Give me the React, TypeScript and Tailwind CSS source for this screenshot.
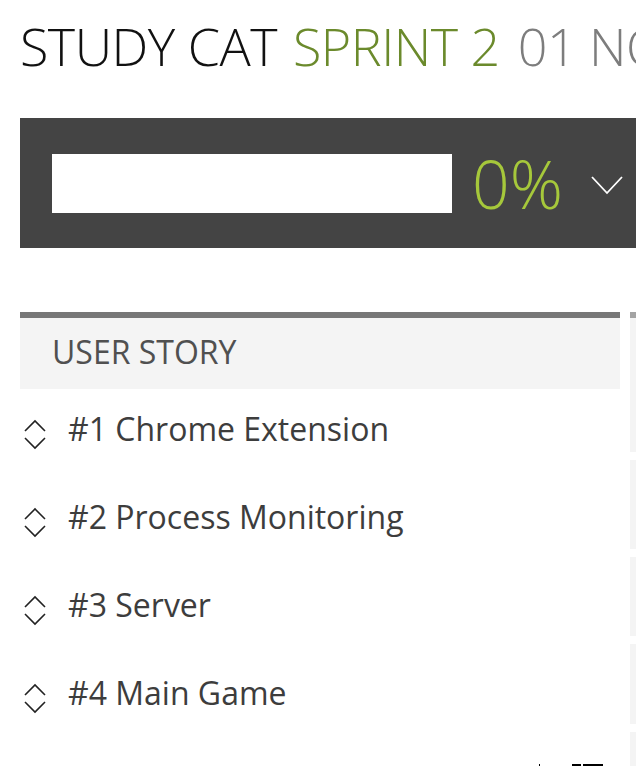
import React from "react";

const stories = [
  "#1 Chrome Extension",
  "#2 Process Monitoring",
  "#3 Server",
  "#4 Main Game",
];

const sideCells = ["h-[140px]", "h-[89px]", "h-[79px]", "h-[80px]", "h-[60px]"];

function SortIcon() {
  return (
    <svg width="24" height="32" viewBox="0 0 24 32" className="shrink-0 text-[#222]">
      <path d="M2 12 L12 2 L22 12" fill="none" stroke="currentColor" strokeWidth="1.6" />
      <path d="M2 19 L12 29 L22 19" fill="none" stroke="currentColor" strokeWidth="1.6" />
    </svg>
  );
}

export default function App() {
  return (
    <div className="h-[766px] w-[636px] overflow-hidden bg-white font-['Open_Sans',sans-serif]">
      <h1 className="flex whitespace-nowrap pl-5 pt-5 text-[52px] font-light leading-none tracking-[-0.5px]">
        <span className="text-[#111]">STUDY CAT</span>
        <span className="ml-[16px] text-[#6b8a2c]">SPRINT 2</span>
        <span className="ml-[18px] text-[#7d7d7d]">01 NOV 2017</span>
      </h1>

      <div className="ml-5 mt-[46px] flex h-[130px] w-[640px] items-center bg-[#444444] pl-8">
        <div className="h-[59px] w-[400px] bg-white" />
        <span className="ml-[20px] text-[66px] font-light leading-none text-[#a6c83b]">0%</span>
        <svg width="32" height="19" viewBox="0 0 32 19" className="ml-[28px] mt-[4px]">
          <path d="M1 1 L16 17 L31 1" fill="none" stroke="#fff" strokeWidth="1.8" />
        </svg>
      </div>

      <div className="mt-16 flex gap-[10px] pl-5">
        <div className="w-[600px] shrink-0">
          <div className="h-[77px] border-t-[6px] border-[#777] bg-[#f4f4f4] pl-[32px] pt-[18px] text-[32px] leading-none text-[#505050]">
            USER STORY
          </div>
          {stories.map((s) => (
            <div key={s} className="flex h-[88px] items-start pt-[24px]">
              <span className="ml-[3px] mt-[6px]">
                <SortIcon />
              </span>
              <span className="ml-[21px] whitespace-nowrap text-[32px] leading-none text-[#3d3d3d]">
                {s}
              </span>
            </div>
          ))}
          <div className="relative">
            <span className="absolute left-[519px] top-[23px] h-[6px] w-[1px] bg-black" />
            <span className="absolute left-[552px] top-[23px] h-[6px] w-[9px] bg-black" />
            <span className="absolute left-[563px] top-[23px] h-[6px] w-[20px] bg-black" />
          </div>
        </div>
        <div className="flex w-[20px] shrink-0 flex-col gap-[8px]">
          {sideCells.map((h, i) => (
            <div
              key={i}
              className={`${h} bg-[#f4f4f4] ${i === 0 ? "border-t-[6px] border-[#a3a3a3]" : ""}`}
            />
          ))}
        </div>
      </div>
    </div>
  );
}
